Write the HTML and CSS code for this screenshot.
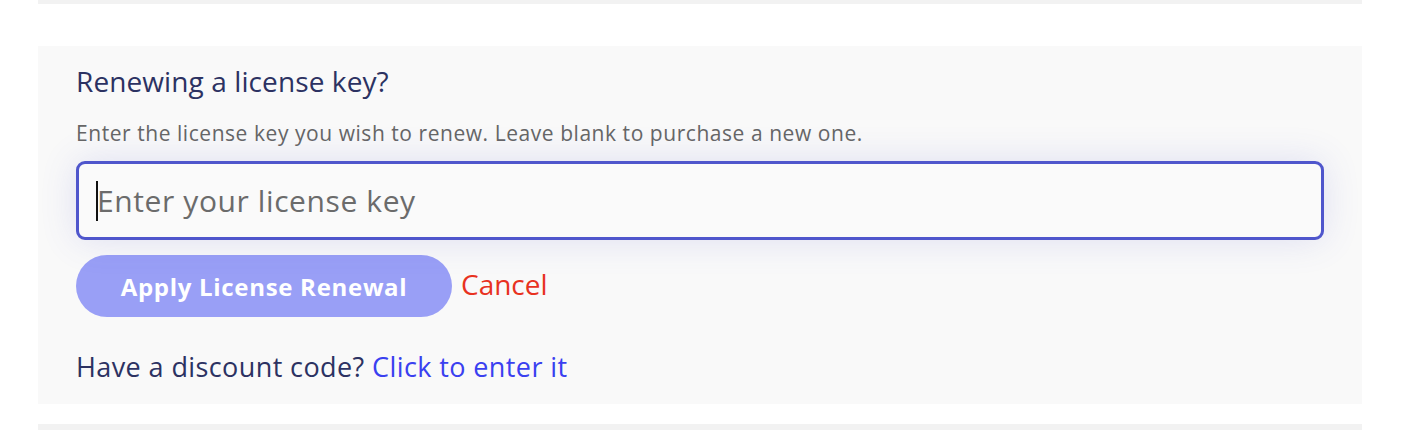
FILE: index.html
```html
<!DOCTYPE html>
<html lang="en">
<head>
<meta charset="utf-8">
<title>License renewal</title>
<link rel="stylesheet" href="styles.css">
</head>
<body>
<div class="bar bar-top"></div>
<section class="panel">
  <h2 class="title">Renewing a license key?</h2>
  <p class="hint">Enter the license key you wish to renew. Leave blank to purchase a new one.</p>
  <div class="field">
    <input class="key-input" type="text" placeholder="Enter your license key">
    <span class="caret"></span>
  </div>
  <div class="actions">
    <button class="apply" type="button">Apply License Renewal</button>
    <a class="cancel" href="#">Cancel</a>
  </div>
  <p class="discount">Have a discount code? <a class="discount-link" href="#">Click to enter it</a></p>
</section>
<div class="bar bar-bottom"></div>
</body>
</html>
```

FILE: styles.css
```css
html, body {
  margin: 0;
  padding: 0;
  background: #ffffff;
}
body {
  font-family: "Open Sans", "Noto Sans", sans-serif;
  width: 1414px;
  height: 444px;
  overflow: hidden;
}
.bar {
  margin-left: 38px;
  width: 1324px;
  background: #f2f2f2;
}
.bar-top {
  height: 4px;
}
.bar-bottom {
  height: 6px;
  margin-top: 20px;
}
.panel {
  margin: 42px 0 0 38px;
  width: 1324px;
  height: 358px;
  box-sizing: border-box;
  padding: 18px 38px 0 38px;
  background: #f9f9f9;
  display: flex;
  flex-direction: column;
}
.title {
  margin: 0;
  font-size: 28px;
  line-height: 34px;
  font-weight: 400;
  letter-spacing: 0.1px;
  color: #2c3262;
}
.hint {
  margin: 22px 0 0 0;
  font-size: 21px;
  line-height: 26px;
  letter-spacing: 0.55px;
  color: #666666;
}
.field {
  position: relative;
  margin: 15px 0 0 0;
  width: 1248px;
  height: 79px;
}
.key-input {
  width: 100%;
  height: 100%;
  box-sizing: border-box;
  border: 3px solid #4f56cc;
  border-radius: 9px;
  background: #fafafa;
  padding: 0 18px;
  font-family: inherit;
  font-size: 30px;
  letter-spacing: 0.6px;
  color: #333;
  outline: none;
  box-shadow: 0 0 36px rgba(80, 88, 204, 0.16);
}
.key-input::placeholder {
  color: #6b6b6b;
}
.caret {
  position: absolute;
  left: 20px;
  top: 20px;
  width: 2px;
  height: 40px;
  background: #111111;
}
.actions {
  margin-top: 15px;
  display: flex;
  align-items: center;
  gap: 9px;
}
.apply {
  width: 376px;
  height: 62px;
  border: none;
  border-radius: 31px;
  background: #999ff6;
  color: #ffffff;
  font-family: inherit;
  font-size: 24px;
  font-weight: 700;
  letter-spacing: 0.7px;
  padding: 0;
}
.cancel {
  margin-bottom: 5px;
  font-size: 28px;
  color: #e8321f;
  text-decoration: none;
}
.discount {
  margin: 34px 0 0 0;
  font-size: 27px;
  line-height: 32px;
  letter-spacing: 0.4px;
  color: #2c3262;
}
.discount-link {
  color: #3a40f0;
  text-decoration: none;
}
```
